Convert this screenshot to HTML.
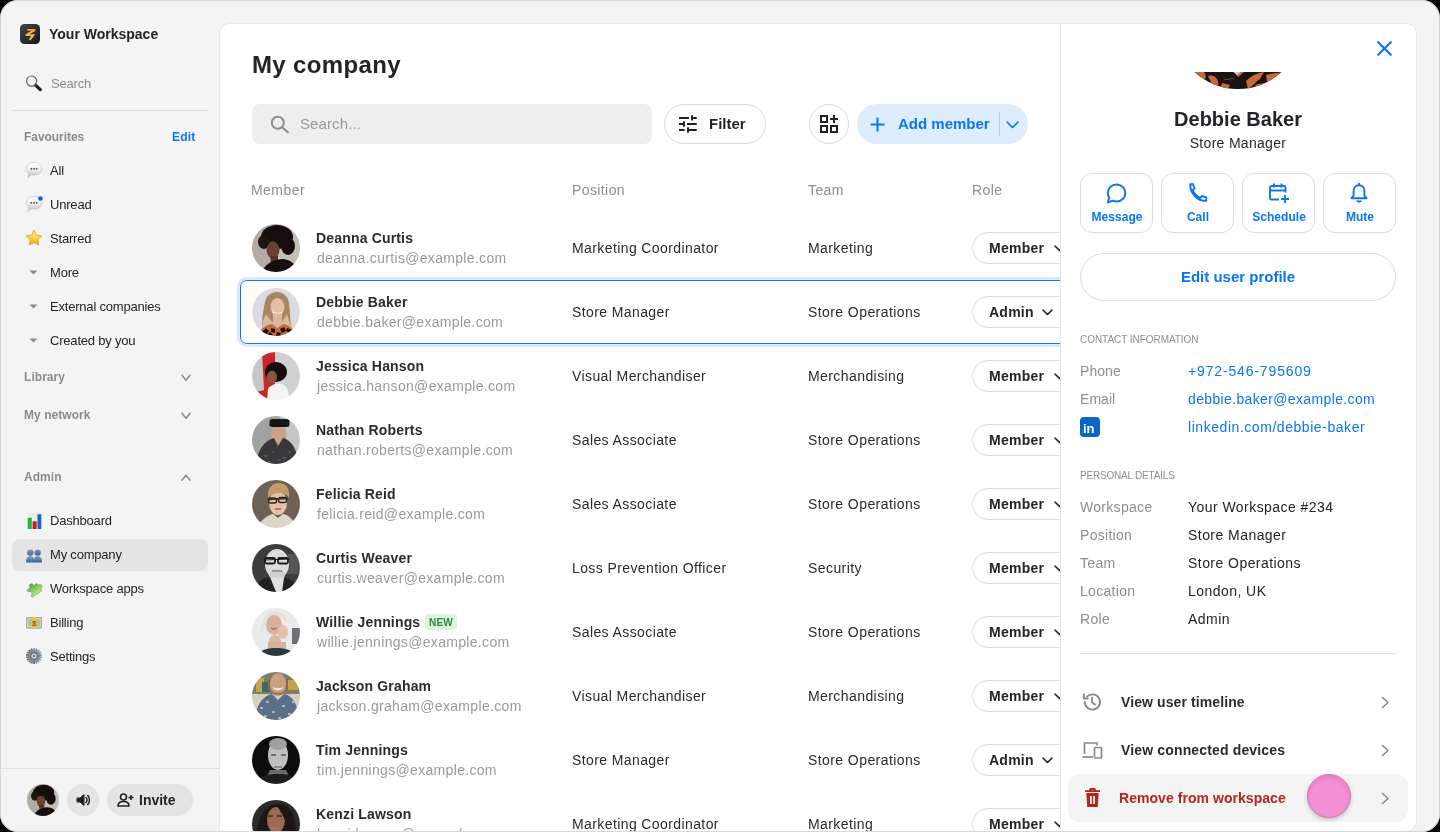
<!DOCTYPE html><html><head><meta charset="utf-8"><style>
html,body{margin:0;padding:0;width:1440px;height:832px;overflow:hidden;background:#000;}
body{font-family:"Liberation Sans", sans-serif;}
.win{position:absolute;left:0;top:0;width:1440px;height:832px;border-radius:18px;background:#f4f4f4;overflow:hidden;}
.t{position:absolute;line-height:1;white-space:nowrap;will-change:transform;}
.b{position:absolute;box-sizing:border-box;}
</style></head><body><div class="win">
<svg class="b" style="left:20px;top:24px;" width="20" height="20" viewBox="0 0 20 20"><defs><linearGradient id="lg" x1="0" y1="0" x2="1" y2="1"><stop offset="0" stop-color="#41454d"/><stop offset="1" stop-color="#15171b"/></linearGradient>
<linearGradient id="bolt" x1="0" y1="0" x2="0" y2="1"><stop offset="0" stop-color="#f4a030"/><stop offset="1" stop-color="#f7cf3a"/></linearGradient></defs>
<rect x="0" y="0" width="20" height="20" rx="4.5" fill="url(#lg)"/>
<path d="M7.3 5.9 L15.2 5.9 L6 11.1 L13.4 11.1 L9.6 15.9" fill="none" stroke="url(#bolt)" stroke-width="1.9" stroke-linejoin="miter" stroke-miterlimit="3"/><path d="M9.8 8.4 L12.2 8.4" stroke="#f2b233" stroke-width="1.2"/></svg>
<div class="t" style="left:48.50px;top:27.15px;font-size:14px;font-weight:700;color:#232428;letter-spacing:0px;">Your Workspace</div>
<svg class="b" style="left:25px;top:75px;" width="18" height="18" viewBox="0 0 18 18"><circle cx="6.6" cy="6.1" r="5.1" fill="#f2f2f2" stroke="#5f6266" stroke-width="1.2"/><path d="M2.2 4.2 A5 5 0 0 1 6.6 1" stroke="#8fb0d8" stroke-width="1" fill="none"/>
<path d="M11 10.6 L15.3 14.6" stroke="#1e2124" stroke-width="3.3" stroke-linecap="round"/><path d="M10.4 10 L11.4 11" stroke="#555" stroke-width="1.2"/></svg>
<div class="t" style="left:50.50px;top:77.00px;font-size:13px;font-weight:400;color:#8b8b8b;letter-spacing:-0.2px;">Search</div>
<div class="b" style="left:12px;top:110px;width:196px;height:1px;background:#dcdce1;"></div>
<div class="t" style="left:23.80px;top:130.84px;font-size:12px;font-weight:700;color:#8b8b8b;letter-spacing:-0.05px;">Favourites</div>
<div class="t" style="right:1245.00px;top:130.84px;font-size:12px;font-weight:700;color:#0b76f2;letter-spacing:0.2px;">Edit</div>
<svg class="b" style="left:25.0px;top:161.0px;" width="18" height="18" viewBox="0 0 17 17"><defs><linearGradient id="bub161" x1="0" y1="0" x2="0" y2="1"><stop offset="0" stop-color="#ffffff"/><stop offset="0.5" stop-color="#ececec"/><stop offset="1" stop-color="#b8b8b8"/></linearGradient></defs>
<path d="M8.5 1.3 C12.9 1.3 16 4 16 7.4 C16 10.8 12.9 13.3 8.5 13.3 C7.6 13.3 6.8 13.2 6 13 L2.6 15.8 L3.6 12 C2.0 10.9 1 9.3 1 7.4 C1 4 4.1 1.3 8.5 1.3 Z" fill="url(#bub161)" stroke="#c2c2c2" stroke-width="0.6"/>
<circle cx="6" cy="7.4" r="0.85" fill="#444"/><circle cx="8.5" cy="7.4" r="0.85" fill="#444"/><circle cx="11" cy="7.4" r="0.85" fill="#444"/></svg>
<div class="t" style="left:50.00px;top:164.00px;font-size:13px;font-weight:400;color:#232428;letter-spacing:-0.2px;">All</div>
<svg class="b" style="left:25.0px;top:195.0px;" width="18" height="18" viewBox="0 0 17 17"><defs><linearGradient id="bub195" x1="0" y1="0" x2="0" y2="1"><stop offset="0" stop-color="#ffffff"/><stop offset="0.5" stop-color="#ececec"/><stop offset="1" stop-color="#b8b8b8"/></linearGradient></defs>
<path d="M8.5 1.3 C12.9 1.3 16 4 16 7.4 C16 10.8 12.9 13.3 8.5 13.3 C7.6 13.3 6.8 13.2 6 13 L2.6 15.8 L3.6 12 C2.0 10.9 1 9.3 1 7.4 C1 4 4.1 1.3 8.5 1.3 Z" fill="url(#bub195)" stroke="#c2c2c2" stroke-width="0.6"/>
<circle cx="6" cy="7.4" r="0.85" fill="#444"/><circle cx="8.5" cy="7.4" r="0.85" fill="#444"/><circle cx="11" cy="7.4" r="0.85" fill="#444"/><circle cx="14.6" cy="3.3" r="2.2" fill="#1d56d8"/></svg>
<div class="t" style="left:50.00px;top:198.00px;font-size:13px;font-weight:400;color:#232428;letter-spacing:-0.2px;">Unread</div>
<svg class="b" style="left:25px;top:229px;" width="18" height="18" viewBox="0 0 18 18"><defs><linearGradient id="star" x1="0" y1="0" x2="0" y2="1"><stop offset="0" stop-color="#fff4a8"/><stop offset="0.5" stop-color="#fbd34a"/><stop offset="1" stop-color="#f0a51c"/></linearGradient></defs>
<path d="M9 1.2 L11.4 6.2 L16.8 6.9 L12.8 10.6 L13.8 16 L9 13.4 L4.2 16 L5.2 10.6 L1.2 6.9 L6.6 6.2 Z" fill="url(#star)" stroke="#eda021" stroke-width="0.9" stroke-linejoin="round"/></svg>
<div class="t" style="left:50.00px;top:232.00px;font-size:13px;font-weight:400;color:#232428;letter-spacing:-0.2px;">Starred</div>
<svg class="b" style="left:29px;top:269.5px;" width="9" height="5" viewBox="0 0 9 5"><path d="M0.5 0.5 L8.5 0.5 L4.5 4.5 Z" fill="#8a8a8a"/></svg>
<div class="t" style="left:50.00px;top:266.00px;font-size:13px;font-weight:400;color:#232428;letter-spacing:-0.2px;">More</div>
<svg class="b" style="left:29px;top:303.5px;" width="9" height="5" viewBox="0 0 9 5"><path d="M0.5 0.5 L8.5 0.5 L4.5 4.5 Z" fill="#8a8a8a"/></svg>
<div class="t" style="left:50.00px;top:300.00px;font-size:13px;font-weight:400;color:#232428;letter-spacing:-0.2px;">External companies</div>
<svg class="b" style="left:29px;top:337.5px;" width="9" height="5" viewBox="0 0 9 5"><path d="M0.5 0.5 L8.5 0.5 L4.5 4.5 Z" fill="#8a8a8a"/></svg>
<div class="t" style="left:50.00px;top:334.00px;font-size:13px;font-weight:400;color:#232428;letter-spacing:-0.2px;">Created by you</div>
<div class="t" style="left:23.80px;top:371.14px;font-size:12px;font-weight:700;color:#8b8b8b;letter-spacing:0.05px;">Library</div>
<svg class="b" style="left:181px;top:373.5px;" width="10" height="8" viewBox="0 0 10 8"><path d="M1 1.2 L5.00 6.20 L9 1.2" fill="none" stroke="#8a8a8a" stroke-width="1.5" stroke-linecap="round" stroke-linejoin="round"/></svg>
<div class="t" style="left:23.80px;top:409.14px;font-size:12px;font-weight:700;color:#8b8b8b;letter-spacing:0.05px;">My network</div>
<svg class="b" style="left:181px;top:411.5px;" width="10" height="8" viewBox="0 0 10 8"><path d="M1 1.2 L5.00 6.20 L9 1.2" fill="none" stroke="#8a8a8a" stroke-width="1.5" stroke-linecap="round" stroke-linejoin="round"/></svg>
<div class="t" style="left:23.80px;top:471.14px;font-size:12px;font-weight:700;color:#8b8b8b;letter-spacing:0.05px;">Admin</div>
<svg class="b" style="left:181px;top:473.5px;" width="10" height="8" viewBox="0 0 10 8"><path d="M1 6.20 L5.00 1.2 L9 6.20" fill="none" stroke="#8a8a8a" stroke-width="1.5" stroke-linecap="round" stroke-linejoin="round"/></svg>
<div class="b" style="left:12px;top:539px;width:196px;height:32px;background:#e4e4e4;border-radius:8px;"></div>
<svg class="b" style="left:26.5px;top:513px;" width="15" height="17" viewBox="0 0 15 17"><defs><linearGradient id="dbg" x1="0" y1="0" x2="0" y2="1"><stop offset="0" stop-color="#e4ebf2"/><stop offset="1" stop-color="#f6f8fa"/></linearGradient></defs><rect x="0.5" y="0.5" width="14" height="16" fill="url(#dbg)"/>
<rect x="0.7" y="4.8" width="4.1" height="11.2" fill="#22b53a"/><rect x="5.6" y="8.3" width="4.1" height="7.7" fill="#d01d1d"/><rect x="10.5" y="1.3" width="3.8" height="14.7" fill="#1f5fc9"/></svg>
<div class="t" style="left:50.00px;top:514.00px;font-size:13px;font-weight:400;color:#232428;letter-spacing:-0.2px;">Dashboard</div>
<svg class="b" style="left:26px;top:549px;" width="16" height="14" viewBox="0 0 16 14"><defs><linearGradient id="ppl" x1="0" y1="0" x2="0" y2="1"><stop offset="0" stop-color="#7d9fc8"/><stop offset="1" stop-color="#3d628f"/></linearGradient></defs>
<circle cx="4.3" cy="3.6" r="3.2" fill="url(#ppl)"/><path d="M0 13.5 C0 8.8 1.5 7.3 4.3 7.3 C7.1 7.3 8.3 8.8 8.3 13.5 Z" fill="url(#ppl)"/>
<circle cx="11.7" cy="3.6" r="3.2" fill="url(#ppl)"/><path d="M7.7 13.5 C7.7 8.8 8.9 7.3 11.7 7.3 C14.5 7.3 16 8.8 16 13.5 Z" fill="url(#ppl)"/></svg>
<div class="t" style="left:50.00px;top:548.00px;font-size:13px;font-weight:400;color:#232428;letter-spacing:-0.2px;">My company</div>
<svg class="b" style="left:25px;top:580px;" width="18" height="18" viewBox="0 0 18 18"><defs><linearGradient id="pz" x1="0" y1="0" x2="0" y2="1"><stop offset="0" stop-color="#4ea84a"/><stop offset="1" stop-color="#b8e878"/></linearGradient></defs>
<g transform="translate(9 9.5) rotate(-35)"><path d="M-6 -3.5 L-2 -3.5 C-3 -7.5 3 -7.5 2 -3.5 L6 -3.5 L6 -1 C9.5 -2 9.5 4 6 3 L6 5.5 L-6 5.5 L-6 3 C-3 4 -3 -2 -6 -1 Z" fill="url(#pz)" stroke="#3f8a38" stroke-width="0.4"/></g></svg>
<div class="t" style="left:50.00px;top:582.00px;font-size:13px;font-weight:400;color:#232428;letter-spacing:-0.2px;">Workspace apps</div>
<svg class="b" style="left:26px;top:617px;" width="16" height="11.5" viewBox="0 0 16 11.5"><rect x="0.3" y="0.3" width="15.4" height="10.9" rx="1" fill="#b9bba0" stroke="#8d8f75" stroke-width="0.6"/><rect x="1.8" y="1.8" width="12.4" height="7.9" fill="none" stroke="#e8e8d8" stroke-width="0.6"/>
<rect x="5.6" y="0.3" width="4.8" height="10.9" fill="#f0c43a"/><text x="8" y="8.6" font-size="7.5" text-anchor="middle" fill="#4a4a20" font-family="Liberation Sans">$</text></svg>
<div class="t" style="left:50.00px;top:616.00px;font-size:13px;font-weight:400;color:#232428;letter-spacing:-0.2px;">Billing</div>
<svg class="b" style="left:26px;top:648px;" width="16" height="16" viewBox="0 0 16 16"><defs><linearGradient id="gr" x1="0" y1="0" x2="1" y2="1"><stop offset="0" stop-color="#a9b1b8"/><stop offset="1" stop-color="#5a636b"/></linearGradient></defs>
<g transform="translate(8 8)"><g fill="url(#gr)"><rect x="-1" y="-8" width="2" height="16" rx="0.5" transform="rotate(0)"/><rect x="-1" y="-8" width="2" height="16" rx="0.5" transform="rotate(20)"/><rect x="-1" y="-8" width="2" height="16" rx="0.5" transform="rotate(40)"/><rect x="-1" y="-8" width="2" height="16" rx="0.5" transform="rotate(60)"/><rect x="-1" y="-8" width="2" height="16" rx="0.5" transform="rotate(80)"/><rect x="-1" y="-8" width="2" height="16" rx="0.5" transform="rotate(100)"/><rect x="-1" y="-8" width="2" height="16" rx="0.5" transform="rotate(120)"/><rect x="-1" y="-8" width="2" height="16" rx="0.5" transform="rotate(140)"/><rect x="-1" y="-8" width="2" height="16" rx="0.5" transform="rotate(160)"/></g>
<circle r="6" fill="#838c94"/><circle r="4.2" fill="#6d767e"/><circle r="2.6" fill="#d6dade"/><circle r="1.3" fill="#6d767e"/></g></svg>
<div class="t" style="left:50.00px;top:650.00px;font-size:13px;font-weight:400;color:#232428;letter-spacing:-0.2px;">Settings</div>
<div class="b" style="left:0px;top:768px;width:220px;height:1px;background:#dcdce1;"></div>
<svg class="b" style="left:27px;top:784px;" width="32" height="32" viewBox="0 0 48 48"><defs><clipPath id="c1"><circle cx="24" cy="24" r="24"/></clipPath><filter id="fc1" x="-10%" y="-10%" width="120%" height="120%"><feGaussianBlur stdDeviation="0.7"/></filter></defs><g clip-path="url(#c1)"><g filter="url(#fc1)"><rect width="48" height="48" fill="#b3aca4"/><rect x="26" width="22" height="48" fill="#c4beb7"/>
<ellipse cx="25" cy="13" rx="16" ry="12" fill="#17110e"/><ellipse cx="36" cy="22" rx="7" ry="9" fill="#17110e"/><ellipse cx="12" cy="18" rx="6" ry="7" fill="#1c1410"/>
<ellipse cx="21" cy="26" rx="6.5" ry="8.5" fill="#6b4331"/><path d="M18 32 L26 32 L26 39 L19 39 Z" fill="#55352a"/>
<path d="M10 48 C13 40 20 36 30 35 C38 35 44 40 46 48 Z" fill="#121111"/></g></g></svg>
<div class="b" style="left:67px;top:784px;width:32px;height:32px;background:#e4e4e4;border-radius:16px;"></div>
<svg class="b" style="left:75px;top:792px;" width="16" height="16" viewBox="0 0 16 16"><path d="M2 6 L5 6 L9 2.5 L9 13.5 L5 10 L2 10 Z" fill="#222" stroke="#222" stroke-width="1" stroke-linejoin="round"/>
<path d="M11 5.5 C12.3 6.8 12.3 9.2 11 10.5" fill="none" stroke="#222" stroke-width="1.5" stroke-linecap="round"/><path d="M12.8 3.5 C15 5.8 15 10.2 12.8 12.5" fill="none" stroke="#222" stroke-width="1.5" stroke-linecap="round"/></svg>
<div class="b" style="left:107px;top:784px;width:86px;height:32px;background:#e4e4e4;border-radius:16px;"></div>
<svg class="b" style="left:117px;top:792px;" width="17" height="16" viewBox="0 0 17 16"><circle cx="6.5" cy="5" r="3" fill="none" stroke="#222" stroke-width="1.6"/><path d="M1 14 C1 10.5 3.5 9.5 6.5 9.5 C9.5 9.5 12 10.5 12 14 Z" fill="none" stroke="#222" stroke-width="1.6" stroke-linejoin="round"/>
<path d="M14 3 L14 8 M11.5 5.5 L16.5 5.5" stroke="#222" stroke-width="1.6"/></svg>
<div class="t" style="left:139.00px;top:793.15px;font-size:14px;font-weight:700;color:#232428;letter-spacing:0px;">Invite</div>
<div class="b" style="left:220px;top:24px;width:1196px;height:807px;background:#fff;border-radius:10px 10px 10px 0;box-shadow:0 0 0 1px #e9e9ec;"></div>
<div class="t" style="left:252.30px;top:52.68px;font-size:24px;font-weight:700;color:#232428;letter-spacing:0.35px;">My company</div>
<div class="b" style="left:252px;top:104px;width:400px;height:40px;background:#eeeeee;border-radius:8px;"></div>
<svg class="b" style="left:270px;top:115px;" width="20" height="18" viewBox="0 0 20 18"><circle cx="7.8" cy="7.8" r="6" fill="none" stroke="#8c8c8c" stroke-width="2"/><path d="M12.2 12.2 L18 17.5" stroke="#8c8c8c" stroke-width="2.2" stroke-linecap="round"/></svg>
<div class="t" style="left:300.00px;top:116.30px;font-size:15px;font-weight:400;color:#9a9a9a;letter-spacing:0.1px;">Search...</div>
<div class="b" style="left:664px;top:104px;width:102px;height:40px;border:1px solid #dcdce0;border-radius:20px;background:#fff;"></div>
<svg class="b" style="left:679px;top:115px;" width="19" height="18" viewBox="0 0 19 18"><g stroke="#1f2023" stroke-width="1.9" stroke-linecap="butt">
<path d="M0 3 L10 3 M13 3 L17.8 3 M13 0.2 L13 5.6"/>
<path d="M0 9 L5 9 M8 9 L17.8 9 M5 6.3 L5 11.7"/>
<path d="M0 15 L5.6 15 M9 15 L17.8 15 M9 12.2 L9 17.8"/></g></svg>
<div class="t" style="left:708.80px;top:116.10px;font-size:15px;font-weight:700;color:#232428;letter-spacing:0px;">Filter</div>
<div class="b" style="left:809px;top:104px;width:40px;height:40px;border:1px solid #dcdce0;border-radius:20px;background:#fff;"></div>
<svg class="b" style="left:820px;top:115px;" width="18" height="18" viewBox="0 0 18 18"><g fill="none" stroke="#222" stroke-width="2">
<rect x="1" y="1" width="6" height="6"/><rect x="1" y="11" width="6" height="6"/><rect x="11" y="11" width="6" height="6"/>
<path d="M14 0 L14 8 M10 4 L18 4"/></g></svg>
<div class="b" style="left:857px;top:104px;width:171px;height:40px;background:#deedfd;border-radius:20px;"></div>
<svg class="b" style="left:869.5px;top:116.5px;" width="15" height="15" viewBox="0 0 15 15"><path d="M7.5 0.5 L7.5 14.5 M0.5 7.5 L14.5 7.5" stroke="#0b76f2" stroke-width="2"/></svg>
<div class="t" style="left:897.80px;top:116.10px;font-size:15px;font-weight:700;color:#0b76f2;letter-spacing:0px;">Add member</div>
<div class="b" style="left:999px;top:112px;width:1px;height:24px;background:#a9cdf6;"></div>
<svg class="b" style="left:1005.5px;top:120.5px;" width="13" height="8" viewBox="0 0 13 8"><path d="M1 1 L6.5 6.5 L12 1" fill="none" stroke="#0b76f2" stroke-width="1.6" stroke-linecap="round" stroke-linejoin="round"/></svg>
<div class="t" style="left:251.30px;top:183.15px;font-size:14px;font-weight:400;color:#8e8e8e;letter-spacing:0.45px;">Member</div>
<div class="t" style="left:571.50px;top:183.15px;font-size:14px;font-weight:400;color:#8e8e8e;letter-spacing:0.4px;">Position</div>
<div class="t" style="left:807.80px;top:183.15px;font-size:14px;font-weight:400;color:#8e8e8e;letter-spacing:0.4px;">Team</div>
<div class="t" style="left:971.50px;top:183.15px;font-size:14px;font-weight:400;color:#8e8e8e;letter-spacing:0.4px;">Role</div>
<div class="b" style="left:0;top:0;width:1060px;height:831px;overflow:hidden;">
<svg class="b" style="left:252px;top:224px;" width="48" height="48" viewBox="0 0 48 48"><defs><clipPath id="c2"><circle cx="24" cy="24" r="24"/></clipPath><filter id="fc2" x="-10%" y="-10%" width="120%" height="120%"><feGaussianBlur stdDeviation="0.7"/></filter></defs><g clip-path="url(#c2)"><g filter="url(#fc2)"><rect width="48" height="48" fill="#b3aca4"/><rect x="26" width="22" height="48" fill="#c4beb7"/>
<ellipse cx="25" cy="13" rx="16" ry="12" fill="#17110e"/><ellipse cx="36" cy="22" rx="7" ry="9" fill="#17110e"/><ellipse cx="12" cy="18" rx="6" ry="7" fill="#1c1410"/>
<ellipse cx="21" cy="26" rx="6.5" ry="8.5" fill="#6b4331"/><path d="M18 32 L26 32 L26 39 L19 39 Z" fill="#55352a"/>
<path d="M10 48 C13 40 20 36 30 35 C38 35 44 40 46 48 Z" fill="#121111"/></g></g></svg>
<div class="t" style="left:315.60px;top:230.95px;font-size:14px;font-weight:700;color:#2a2b2f;letter-spacing:0.17px;">Deanna Curtis</div>
<div class="t" style="left:316.50px;top:251.15px;font-size:14px;font-weight:400;color:#9a9a9a;letter-spacing:0.32px;">deanna.curtis@example.com</div>
<div class="t" style="left:572.20px;top:241.35px;font-size:14px;font-weight:400;color:#2a2b2f;letter-spacing:0.4px;">Marketing Coordinator</div>
<div class="t" style="left:808.20px;top:241.35px;font-size:14px;font-weight:400;color:#2a2b2f;letter-spacing:0.42px;">Marketing</div>
<div class="b" style="left:972px;top:232px;width:110px;height:32px;border:1px solid #dcdce2;border-radius:16px;background:#fff;"></div>
<div class="t" style="left:988.60px;top:241.15px;font-size:14px;font-weight:700;color:#232428;letter-spacing:0.25px;">Member</div>
<svg class="b" style="left:1054px;top:245px;" width="11" height="7" viewBox="0 0 11 7"><path d="M1 1 L5.5 5.5 L10 1" fill="none" stroke="#222" stroke-width="1.6" stroke-linecap="round" stroke-linejoin="round"/></svg>
<div class="b" style="left:240px;top:280px;width:900px;height:64px;border:1px solid #0b78f5;border-radius:7px;box-shadow:0 0 0 3px #dae9fc;"></div>
<svg class="b" style="left:252px;top:288px;" width="48" height="48" viewBox="0 0 48 48"><defs><clipPath id="c3"><circle cx="24" cy="24" r="24"/></clipPath><filter id="fc3" x="-10%" y="-10%" width="120%" height="120%"><feGaussianBlur stdDeviation="0.7"/></filter></defs><g clip-path="url(#c3)"><g filter="url(#fc3)"><rect width="48" height="48" fill="#dcdbe0"/>
<path d="M11 42 C9 30 12 20 13 14 C15 6 21 4 25 4 C31 4 36 8 37 15 C38 22 38 32 40 42 Z" fill="#a98563"/>
<path d="M11 42 C10 34 12 30 14 26 L20 34 L30 34 L35 26 C37 32 38 36 41 42 Z" fill="#d4bc9c"/>
<ellipse cx="25.5" cy="19" rx="7" ry="9" fill="#e6bea6"/><rect x="21" y="26" width="9" height="10" fill="#ddb49c"/>
<path d="M20 23 Q25.5 27 31 23 L30 24.5 Q25.5 26.5 21 24.5 Z" fill="#fff"/>
<path d="M6 48 C8 40 14 37 20 36 L25.5 40 L31 36 C37 37 42 40 44 48 Z" fill="#c56a38"/>
<path d="M10 44 l4 -4 l3 3 l-3 4z M19 40 l4 1 l0 4 l-4 -1z M28 41 l4 -2 l2 4 l-4 2z M35 40 l5 2 l-2 3 l-4 -2z M15 47 l3 -3 l3 3z M25 44 l4 1 l-1 3 l-4 0z M38 46 l3 -2 l2 3z" fill="#1a100c"/></g></g></svg>
<div class="t" style="left:315.60px;top:294.95px;font-size:14px;font-weight:700;color:#2a2b2f;letter-spacing:0.17px;">Debbie Baker</div>
<div class="t" style="left:316.50px;top:315.15px;font-size:14px;font-weight:400;color:#9a9a9a;letter-spacing:0.32px;">debbie.baker@example.com</div>
<div class="t" style="left:572.20px;top:305.35px;font-size:14px;font-weight:400;color:#2a2b2f;letter-spacing:0.4px;">Store Manager</div>
<div class="t" style="left:808.20px;top:305.35px;font-size:14px;font-weight:400;color:#2a2b2f;letter-spacing:0.42px;">Store Operations</div>
<div class="b" style="left:972px;top:296px;width:110px;height:32px;border:1px solid #dcdce2;border-radius:16px;background:#fff;"></div>
<div class="t" style="left:988.60px;top:305.15px;font-size:14px;font-weight:700;color:#232428;letter-spacing:0.25px;">Admin</div>
<svg class="b" style="left:1042px;top:309px;" width="11" height="7" viewBox="0 0 11 7"><path d="M1 1 L5.5 5.5 L10 1" fill="none" stroke="#222" stroke-width="1.6" stroke-linecap="round" stroke-linejoin="round"/></svg>
<svg class="b" style="left:252px;top:352px;" width="48" height="48" viewBox="0 0 48 48"><defs><clipPath id="c4"><circle cx="24" cy="24" r="24"/></clipPath><filter id="fc4" x="-10%" y="-10%" width="120%" height="120%"><feGaussianBlur stdDeviation="0.7"/></filter></defs><g clip-path="url(#c4)"><g filter="url(#fc4)"><rect width="48" height="48" fill="#c6c8c7"/><path d="M10 0 L23 0 L23 48 L8 48 L4 40 L12 38 Z" fill="#c8262b"/>
<rect x="23" y="0" width="25" height="48" fill="#cfd1d0"/>
<ellipse cx="24" cy="20" rx="11" ry="10" fill="#141010"/><ellipse cx="20" cy="25" rx="5" ry="6.5" fill="#87563d"/>
<path d="M15 48 L16 37 C18 33 24 31 30 32 C35 34 37 40 38 48 Z" fill="#f4f4f2"/></g></g></svg>
<div class="t" style="left:315.60px;top:358.95px;font-size:14px;font-weight:700;color:#2a2b2f;letter-spacing:0.17px;">Jessica Hanson</div>
<div class="t" style="left:316.50px;top:379.15px;font-size:14px;font-weight:400;color:#9a9a9a;letter-spacing:0.32px;">jessica.hanson@example.com</div>
<div class="t" style="left:572.20px;top:369.35px;font-size:14px;font-weight:400;color:#2a2b2f;letter-spacing:0.4px;">Visual Merchandiser</div>
<div class="t" style="left:808.20px;top:369.35px;font-size:14px;font-weight:400;color:#2a2b2f;letter-spacing:0.42px;">Merchandising</div>
<div class="b" style="left:972px;top:360px;width:110px;height:32px;border:1px solid #dcdce2;border-radius:16px;background:#fff;"></div>
<div class="t" style="left:988.60px;top:369.15px;font-size:14px;font-weight:700;color:#232428;letter-spacing:0.25px;">Member</div>
<svg class="b" style="left:1054px;top:373px;" width="11" height="7" viewBox="0 0 11 7"><path d="M1 1 L5.5 5.5 L10 1" fill="none" stroke="#222" stroke-width="1.6" stroke-linecap="round" stroke-linejoin="round"/></svg>
<svg class="b" style="left:252px;top:416px;" width="48" height="48" viewBox="0 0 48 48"><defs><clipPath id="c5"><circle cx="24" cy="24" r="24"/></clipPath><filter id="fc5" x="-10%" y="-10%" width="120%" height="120%"><feGaussianBlur stdDeviation="0.7"/></filter></defs><g clip-path="url(#c5)"><g filter="url(#fc5)"><rect width="48" height="48" fill="#a2a2a2"/><rect x="28" width="20" height="48" fill="#c6c6c6"/>
<ellipse cx="26.5" cy="18" rx="8" ry="10" fill="#c9a289"/><path d="M17 11 C17 3 37 2 37 11 L36 9 L18 9 Z" fill="#111"/><rect x="17.5" y="3" width="20" height="8" rx="3" fill="#151515"/>
<path d="M4 48 C5 36 12 24 22 22 L26 30 L31 22 C40 24 45 34 47 48 Z" fill="#39393b"/>
<path d="M12 40 h4 M20 36 h3 M30 42 h4 M36 36 h3 M16 46 h3 M26 44 h3" stroke="#6a6a6c" stroke-width="1"/></g></g></svg>
<div class="t" style="left:315.60px;top:422.95px;font-size:14px;font-weight:700;color:#2a2b2f;letter-spacing:0.17px;">Nathan Roberts</div>
<div class="t" style="left:316.50px;top:443.15px;font-size:14px;font-weight:400;color:#9a9a9a;letter-spacing:0.32px;">nathan.roberts@example.com</div>
<div class="t" style="left:572.20px;top:433.35px;font-size:14px;font-weight:400;color:#2a2b2f;letter-spacing:0.4px;">Sales Associate</div>
<div class="t" style="left:808.20px;top:433.35px;font-size:14px;font-weight:400;color:#2a2b2f;letter-spacing:0.42px;">Store Operations</div>
<div class="b" style="left:972px;top:424px;width:110px;height:32px;border:1px solid #dcdce2;border-radius:16px;background:#fff;"></div>
<div class="t" style="left:988.60px;top:433.15px;font-size:14px;font-weight:700;color:#232428;letter-spacing:0.25px;">Member</div>
<svg class="b" style="left:1054px;top:437px;" width="11" height="7" viewBox="0 0 11 7"><path d="M1 1 L5.5 5.5 L10 1" fill="none" stroke="#222" stroke-width="1.6" stroke-linecap="round" stroke-linejoin="round"/></svg>
<svg class="b" style="left:252px;top:480px;" width="48" height="48" viewBox="0 0 48 48"><defs><clipPath id="c6"><circle cx="24" cy="24" r="24"/></clipPath><filter id="fc6" x="-10%" y="-10%" width="120%" height="120%"><feGaussianBlur stdDeviation="0.7"/></filter></defs><g clip-path="url(#c6)"><g filter="url(#fc6)"><rect width="48" height="48" fill="#6e6258"/>
<ellipse cx="26" cy="23" rx="9" ry="12" fill="#e5c2a6"/><path d="M16 18 C15 6 22 3 27 3 C34 3 38 8 37 18 C34 12 22 11 16 18 Z" fill="#c59b6c"/>
<path d="M16 19.5 L36 18.5" stroke="#2a2a2a" stroke-width="1.3"/><rect x="16.5" y="18" width="8" height="5" rx="2" fill="none" stroke="#2a2a2a" stroke-width="1.4"/><rect x="26.5" y="17.5" width="8" height="5" rx="2" fill="none" stroke="#2a2a2a" stroke-width="1.4"/>
<path d="M23 29 h6" stroke="#a56a5e" stroke-width="1.6"/>
<path d="M6 48 C8 40 16 35 21 34 L26 38 L31 34 C37 35 42 40 44 48 Z" fill="#dfd5c7"/></g></g></svg>
<div class="t" style="left:315.60px;top:486.95px;font-size:14px;font-weight:700;color:#2a2b2f;letter-spacing:0.17px;">Felicia Reid</div>
<div class="t" style="left:316.50px;top:507.15px;font-size:14px;font-weight:400;color:#9a9a9a;letter-spacing:0.32px;">felicia.reid@example.com</div>
<div class="t" style="left:572.20px;top:497.35px;font-size:14px;font-weight:400;color:#2a2b2f;letter-spacing:0.4px;">Sales Associate</div>
<div class="t" style="left:808.20px;top:497.35px;font-size:14px;font-weight:400;color:#2a2b2f;letter-spacing:0.42px;">Store Operations</div>
<div class="b" style="left:972px;top:488px;width:110px;height:32px;border:1px solid #dcdce2;border-radius:16px;background:#fff;"></div>
<div class="t" style="left:988.60px;top:497.15px;font-size:14px;font-weight:700;color:#232428;letter-spacing:0.25px;">Member</div>
<svg class="b" style="left:1054px;top:501px;" width="11" height="7" viewBox="0 0 11 7"><path d="M1 1 L5.5 5.5 L10 1" fill="none" stroke="#222" stroke-width="1.6" stroke-linecap="round" stroke-linejoin="round"/></svg>
<svg class="b" style="left:252px;top:544px;" width="48" height="48" viewBox="0 0 48 48"><defs><clipPath id="c7"><circle cx="24" cy="24" r="24"/></clipPath><filter id="fc7" x="-10%" y="-10%" width="120%" height="120%"><feGaussianBlur stdDeviation="0.7"/></filter></defs><g clip-path="url(#c7)"><g filter="url(#fc7)"><rect width="48" height="48" fill="#3e3e3e"/><rect x="30" y="10" width="18" height="20" fill="#555"/>
<ellipse cx="25" cy="20" rx="12" ry="15" fill="#dcdcdc"/><ellipse cx="25" cy="31" rx="8" ry="6" fill="#cfcfcf"/>
<path d="M12 16 L38 15" stroke="#1a1a1a" stroke-width="1.2"/><rect x="13" y="14" width="10" height="5.5" rx="1.5" fill="none" stroke="#1a1a1a" stroke-width="1.8"/><rect x="26" y="14" width="10" height="5.5" rx="1.5" fill="none" stroke="#1a1a1a" stroke-width="1.8"/>
<path d="M20 27 h10" stroke="#777" stroke-width="1.3"/>
<path d="M2 48 C4 38 12 32 20 33 L26 48 Z M28 48 L32 34 C40 34 45 40 47 48 Z" fill="#222"/><path d="M18 33 L32 34 L30 48 L24 48 Z" fill="#e0e0e0"/></g></g></svg>
<div class="t" style="left:315.60px;top:550.95px;font-size:14px;font-weight:700;color:#2a2b2f;letter-spacing:0.17px;">Curtis Weaver</div>
<div class="t" style="left:316.50px;top:571.15px;font-size:14px;font-weight:400;color:#9a9a9a;letter-spacing:0.32px;">curtis.weaver@example.com</div>
<div class="t" style="left:572.20px;top:561.35px;font-size:14px;font-weight:400;color:#2a2b2f;letter-spacing:0.4px;">Loss Prevention Officer</div>
<div class="t" style="left:808.20px;top:561.35px;font-size:14px;font-weight:400;color:#2a2b2f;letter-spacing:0.42px;">Security</div>
<div class="b" style="left:972px;top:552px;width:110px;height:32px;border:1px solid #dcdce2;border-radius:16px;background:#fff;"></div>
<div class="t" style="left:988.60px;top:561.15px;font-size:14px;font-weight:700;color:#232428;letter-spacing:0.25px;">Member</div>
<svg class="b" style="left:1054px;top:565px;" width="11" height="7" viewBox="0 0 11 7"><path d="M1 1 L5.5 5.5 L10 1" fill="none" stroke="#222" stroke-width="1.6" stroke-linecap="round" stroke-linejoin="round"/></svg>
<svg class="b" style="left:252px;top:608px;" width="48" height="48" viewBox="0 0 48 48"><defs><clipPath id="c8"><circle cx="24" cy="24" r="24"/></clipPath><filter id="fc8" x="-10%" y="-10%" width="120%" height="120%"><feGaussianBlur stdDeviation="0.7"/></filter></defs><g clip-path="url(#c8)"><g filter="url(#fc8)"><rect width="48" height="48" fill="#e9eced"/><rect x="40" y="20" width="8" height="16" fill="#6a7074"/>
<path d="M9 28 C8 12 14 3 23 3 C31 3 35 8 36 16 L30 10 L14 14 Z" fill="#e8e2d4"/>
<ellipse cx="22" cy="17" rx="8" ry="10" fill="#d9b29c"/><path d="M19 20 q3 2 6 0" stroke="#b0605a" stroke-width="1.4" fill="none"/>
<ellipse cx="31" cy="24" rx="5" ry="7" fill="#e2c0ac"/><ellipse cx="23" cy="33" rx="6" ry="6" fill="#dcb8a2"/><rect x="16" y="34" width="18" height="8" fill="#d5b09a"/>
<path d="M6 48 C8 42 14 40 24 40 C34 40 40 42 44 48 Z" fill="#2b3a40"/></g></g></svg>
<div class="t" style="left:315.60px;top:614.95px;font-size:14px;font-weight:700;color:#2a2b2f;letter-spacing:0.17px;">Willie Jennings</div>
<div class="b" style="left:424.8px;top:613.7px;width:32px;height:16px;background:#dcf3dd;border-radius:4px;"></div>
<div class="t" style="left:429.00px;top:618.33px;font-size:10px;font-weight:700;color:#2a8a3a;letter-spacing:0.2px;">NEW</div>
<div class="t" style="left:316.50px;top:635.15px;font-size:14px;font-weight:400;color:#9a9a9a;letter-spacing:0.32px;">willie.jennings@example.com</div>
<div class="t" style="left:572.20px;top:625.35px;font-size:14px;font-weight:400;color:#2a2b2f;letter-spacing:0.4px;">Sales Associate</div>
<div class="t" style="left:808.20px;top:625.35px;font-size:14px;font-weight:400;color:#2a2b2f;letter-spacing:0.42px;">Store Operations</div>
<div class="b" style="left:972px;top:616px;width:110px;height:32px;border:1px solid #dcdce2;border-radius:16px;background:#fff;"></div>
<div class="t" style="left:988.60px;top:625.15px;font-size:14px;font-weight:700;color:#232428;letter-spacing:0.25px;">Member</div>
<svg class="b" style="left:1054px;top:629px;" width="11" height="7" viewBox="0 0 11 7"><path d="M1 1 L5.5 5.5 L10 1" fill="none" stroke="#222" stroke-width="1.6" stroke-linecap="round" stroke-linejoin="round"/></svg>
<svg class="b" style="left:252px;top:672px;" width="48" height="48" viewBox="0 0 48 48"><defs><clipPath id="c9"><circle cx="24" cy="24" r="24"/></clipPath><filter id="fc9" x="-10%" y="-10%" width="120%" height="120%"><feGaussianBlur stdDeviation="0.7"/></filter></defs><g clip-path="url(#c9)"><g filter="url(#fc9)"><rect width="48" height="48" fill="#d6cfc0"/><rect x="0" y="0" width="48" height="22" fill="#7b8064"/><rect x="4" y="6" width="8" height="14" fill="#c7a452"/><rect x="36" y="8" width="10" height="10" fill="#c4a24e"/><rect x="10" y="10" width="8" height="10" fill="#3e6a62"/>
<ellipse cx="26" cy="12" rx="8" ry="11" fill="#caa080"/><path d="M18 8 L18 18 L16 18 L16 6 Z M34 8 L36 6 L36 18 L34 18Z" fill="#8a6a48"/>
<path d="M21 15 q5 3 10 0 l-1 2 q-4 2 -8 0z" fill="#fff"/><path d="M19 18 q7 6 14 0 l0 3 q-7 5 -14 0z" fill="#9a7860"/>
<path d="M3 48 C4 34 10 24 20 22 L26 28 L32 22 C42 24 46 34 47 48 Z" fill="#5a7088"/>
<path d="M8 36 h3 M14 30 h3 M20 40 h3 M30 34 h3 M36 42 h3 M40 30 h3 M12 44 h3 M26 46 h3" stroke="#c0ccd6" stroke-width="1.4"/></g></g></svg>
<div class="t" style="left:315.60px;top:678.95px;font-size:14px;font-weight:700;color:#2a2b2f;letter-spacing:0.17px;">Jackson Graham</div>
<div class="t" style="left:316.50px;top:699.15px;font-size:14px;font-weight:400;color:#9a9a9a;letter-spacing:0.32px;">jackson.graham@example.com</div>
<div class="t" style="left:572.20px;top:689.35px;font-size:14px;font-weight:400;color:#2a2b2f;letter-spacing:0.4px;">Visual Merchandiser</div>
<div class="t" style="left:808.20px;top:689.35px;font-size:14px;font-weight:400;color:#2a2b2f;letter-spacing:0.42px;">Merchandising</div>
<div class="b" style="left:972px;top:680px;width:110px;height:32px;border:1px solid #dcdce2;border-radius:16px;background:#fff;"></div>
<div class="t" style="left:988.60px;top:689.15px;font-size:14px;font-weight:700;color:#232428;letter-spacing:0.25px;">Member</div>
<svg class="b" style="left:1054px;top:693px;" width="11" height="7" viewBox="0 0 11 7"><path d="M1 1 L5.5 5.5 L10 1" fill="none" stroke="#222" stroke-width="1.6" stroke-linecap="round" stroke-linejoin="round"/></svg>
<svg class="b" style="left:252px;top:736px;" width="48" height="48" viewBox="0 0 48 48"><defs><clipPath id="c10"><circle cx="24" cy="24" r="24"/></clipPath><filter id="fc10" x="-10%" y="-10%" width="120%" height="120%"><feGaussianBlur stdDeviation="0.7"/></filter></defs><g clip-path="url(#c10)"><g filter="url(#fc10)"><rect width="48" height="48" fill="#0b0b0b"/>
<ellipse cx="26" cy="19" rx="10" ry="15" fill="#bfbfbf"/><ellipse cx="26" cy="8" rx="9" ry="6" fill="#a0a0a0"/>
<path d="M19 19 h5 M29 19 h5" stroke="#555" stroke-width="1.5"/><path d="M22 31 h8" stroke="#666" stroke-width="1.2"/>
<path d="M18 34 L34 34 L38 42 L14 42 Z" fill="#6a6a6a"/><path d="M6 48 C8 40 14 38 26 38 C38 38 44 40 46 48 Z" fill="#1c1c1c"/></g></g></svg>
<div class="t" style="left:315.60px;top:742.95px;font-size:14px;font-weight:700;color:#2a2b2f;letter-spacing:0.17px;">Tim Jennings</div>
<div class="t" style="left:316.50px;top:763.15px;font-size:14px;font-weight:400;color:#9a9a9a;letter-spacing:0.32px;">tim.jennings@example.com</div>
<div class="t" style="left:572.20px;top:753.35px;font-size:14px;font-weight:400;color:#2a2b2f;letter-spacing:0.4px;">Store Manager</div>
<div class="t" style="left:808.20px;top:753.35px;font-size:14px;font-weight:400;color:#2a2b2f;letter-spacing:0.42px;">Store Operations</div>
<div class="b" style="left:972px;top:744px;width:110px;height:32px;border:1px solid #dcdce2;border-radius:16px;background:#fff;"></div>
<div class="t" style="left:988.60px;top:753.15px;font-size:14px;font-weight:700;color:#232428;letter-spacing:0.25px;">Admin</div>
<svg class="b" style="left:1042px;top:757px;" width="11" height="7" viewBox="0 0 11 7"><path d="M1 1 L5.5 5.5 L10 1" fill="none" stroke="#222" stroke-width="1.6" stroke-linecap="round" stroke-linejoin="round"/></svg>
<svg class="b" style="left:252px;top:800px;" width="48" height="48" viewBox="0 0 48 48"><defs><clipPath id="c11"><circle cx="24" cy="24" r="24"/></clipPath><filter id="fc11" x="-10%" y="-10%" width="120%" height="120%"><feGaussianBlur stdDeviation="0.7"/></filter></defs><g clip-path="url(#c11)"><g filter="url(#fc11)"><rect width="48" height="48" fill="#2e2925"/><path d="M4 48 C3 20 12 4 26 4 C40 4 46 20 44 48 Z" fill="#1f1915"/>
<ellipse cx="24" cy="20" rx="9" ry="13" fill="#9b6a52"/><path d="M24 4 C32 4 36 12 34 22 L30 14 Z" fill="#1a1410"/>
<path d="M19 28 h8" stroke="#b0706a" stroke-width="1.8"/><path d="M16 16 h5 M25 16 h5" stroke="#3a2a22" stroke-width="1.3"/></g></g></svg>
<div class="t" style="left:315.60px;top:806.95px;font-size:14px;font-weight:700;color:#2a2b2f;letter-spacing:0.17px;">Kenzi Lawson</div>
<div class="t" style="left:316.50px;top:827.15px;font-size:14px;font-weight:400;color:#9a9a9a;letter-spacing:0.32px;">kenzi.lawson@example.com</div>
<div class="t" style="left:572.20px;top:817.35px;font-size:14px;font-weight:400;color:#2a2b2f;letter-spacing:0.4px;">Marketing Coordinator</div>
<div class="t" style="left:808.20px;top:817.35px;font-size:14px;font-weight:400;color:#2a2b2f;letter-spacing:0.42px;">Marketing</div>
<div class="b" style="left:972px;top:808px;width:110px;height:32px;border:1px solid #dcdce2;border-radius:16px;background:#fff;"></div>
<div class="t" style="left:988.60px;top:817.15px;font-size:14px;font-weight:700;color:#232428;letter-spacing:0.25px;">Member</div>
<svg class="b" style="left:1054px;top:821px;" width="11" height="7" viewBox="0 0 11 7"><path d="M1 1 L5.5 5.5 L10 1" fill="none" stroke="#222" stroke-width="1.6" stroke-linecap="round" stroke-linejoin="round"/></svg>
</div>
<div class="b" style="left:1060px;top:24px;width:356px;height:806px;background:#fff;border-left:1px solid #e3e3e8;border-radius:0 10px 10px 0;"></div>
<div class="b" style="left:1174px;top:72px;width:128px;height:17px;overflow:hidden;">
<svg style="position:absolute;left:0;top:-111px" width="128" height="128" viewBox="0 0 128 128"><defs><clipPath id="bigc"><circle cx="64" cy="64" r="64"/></clipPath></defs><g clip-path="url(#bigc)"><rect width="128" height="128" fill="#1b1310"/><path d="M8 110 C14 112 18 118 22 128 L12 128 Z M20 110 L30 111 C34 116 30 122 26 124 Z M34 115 C40 113 46 118 44 126 L38 128 C38 122 36 119 34 115 Z M60 111 L70 111 L64 116 Z M72 120 C78 114 84 112 90 111 L86 118 C82 120 78 126 74 128 Z M92 114 C98 112 104 112 110 111 L104 120 C100 118 96 120 94 126 Z M108 118 L120 112 L118 122 Z M48 122 L56 124 L54 128 L46 128 Z M80 124 L90 122 L92 128 Z M100 124 L106 126 L104 128Z M16 118 L24 116 L20 124Z" fill="#c8693a"/><path d="M58 110 L68 110 L63 114 Z" fill="#e8c0a8"/><path d="M50 118 C54 120 56 116 60 118" stroke="#6a6a6a" stroke-width="0.8" fill="none"/></g></svg></div>
<svg class="b" style="left:1376.5px;top:40.5px;" width="15" height="15" viewBox="0 0 15 15"><path d="M1.2 1.2 L13.8 13.8 M13.8 1.2 L1.2 13.8" stroke="#0b76f2" stroke-width="2.1" stroke-linecap="round"/></svg>
<div class="t" style="left:938.00px;width:600px;text-align:center;top:108.87px;font-size:20px;font-weight:700;color:#232428;letter-spacing:0px;">Debbie Baker</div>
<div class="t" style="left:938.00px;width:600px;text-align:center;top:136.15px;font-size:14px;font-weight:400;color:#2a2a2a;letter-spacing:0.3px;">Store Manager</div>
<div class="b" style="left:1080.25px;top:173px;width:72.5px;height:60px;border:1px solid #dcdce2;border-radius:12px;"></div>
<div class="t" style="left:816.50px;width:600px;text-align:center;top:210.84px;font-size:12px;font-weight:700;color:#0b76f2;letter-spacing:0.05px;">Message</div>
<div class="b" style="left:1161.25px;top:173px;width:72.5px;height:60px;border:1px solid #dcdce2;border-radius:12px;"></div>
<div class="t" style="left:897.50px;width:600px;text-align:center;top:210.84px;font-size:12px;font-weight:700;color:#0b76f2;letter-spacing:0.05px;">Call</div>
<div class="b" style="left:1242.25px;top:173px;width:72.5px;height:60px;border:1px solid #dcdce2;border-radius:12px;"></div>
<div class="t" style="left:978.50px;width:600px;text-align:center;top:210.84px;font-size:12px;font-weight:700;color:#0b76f2;letter-spacing:0.05px;">Schedule</div>
<div class="b" style="left:1323.25px;top:173px;width:72.5px;height:60px;border:1px solid #dcdce2;border-radius:12px;"></div>
<div class="t" style="left:1059.50px;width:600px;text-align:center;top:210.84px;font-size:12px;font-weight:700;color:#0b76f2;letter-spacing:0.05px;">Mute</div>
<svg class="b" style="left:1106px;top:183px;" width="21" height="21" viewBox="0 0 21 21"><path d="M10.5 1.5 C15.5 1.5 19.3 5.3 19.3 10 C19.3 14.7 15.5 18.5 10.5 18.5 C9.1 18.5 7.8 18.2 6.7 17.7 L1.7 19.5 L3.3 14.8 C2.4 13.5 1.8 11.8 1.8 10 C1.8 5.3 5.5 1.5 10.5 1.5 Z" fill="none" stroke="#0b76f2" stroke-width="1.9" stroke-linejoin="round"/></svg>
<svg class="b" style="left:1188px;top:183px;" width="20" height="20" viewBox="0 0 20 20"><path d="M2.2 1.3 L5.2 1.3 L6.5 5.5 L4.6 7.2 C6.0 10.6 8.9 13.5 12.3 14.8 L14 13 L18.2 14.3 L18.2 17.8 C10 18.5 1.8 10.4 2.2 1.3 Z" fill="none" stroke="#0b76f2" stroke-width="1.9" stroke-linejoin="round"/></svg>
<svg class="b" style="left:1268px;top:182px;" width="22" height="22" viewBox="0 0 22 22"><g fill="none" stroke="#0b76f2" stroke-width="1.9"><path d="M11 17.5 L3.5 17.5 C2.6 17.5 2 16.9 2 16 L2 5.5 C2 4.6 2.6 4 3.5 4 L16 4 C16.9 4 17.5 4.6 17.5 5.5 L17.5 10.5"/><path d="M2 8.5 L17.5 8.5"/><path d="M6 1.5 L6 5.5 M13.5 1.5 L13.5 5.5"/><path d="M17 13 L17 21 M13 17 L21 17"/></g></svg>
<svg class="b" style="left:1349px;top:182px;" width="20" height="22" viewBox="0 0 20 22"><g fill="none" stroke="#0b76f2" stroke-width="1.9" stroke-linejoin="round"><path d="M10 3.3 C6.7 3.3 4.6 5.9 4.6 9 L4.6 13.6 L2.5 16.2 L17.5 16.2 L15.4 13.6 L15.4 9 C15.4 5.9 13.3 3.3 10 3.3 Z"/><path d="M10 1 L10 3.3"/><path d="M7.8 18.6 C8.3 19.8 11.7 19.8 12.2 18.6"/></g></svg>
<div class="b" style="left:1080px;top:253px;width:316px;height:48px;border:1px solid #dcdce2;border-radius:24px;"></div>
<div class="t" style="left:938.00px;width:600px;text-align:center;top:268.90px;font-size:15px;font-weight:700;color:#0b76f2;letter-spacing:0px;">Edit user profile</div>
<div class="t" style="left:1080.40px;top:334.94px;font-size:10px;font-weight:400;color:#8e8e8e;letter-spacing:-0.05px;">CONTACT INFORMATION</div>
<div class="t" style="left:1080.40px;top:364.35px;font-size:14px;font-weight:400;color:#8e8e8e;letter-spacing:0.05px;">Phone</div>
<div class="t" style="left:1188.30px;top:364.35px;font-size:14px;font-weight:400;color:#0b76f2;letter-spacing:0.85px;">+972-546-795609</div>
<div class="t" style="left:1080.40px;top:392.35px;font-size:14px;font-weight:400;color:#8e8e8e;letter-spacing:0.05px;">Email</div>
<div class="t" style="left:1188.30px;top:392.35px;font-size:14px;font-weight:400;color:#0b76f2;letter-spacing:0.36px;">debbie.baker@example.com</div>
<div class="b" style="left:1080px;top:417px;width:20px;height:20px;background:#0a66c2;border-radius:4px;"></div>
<div class="t" style="left:1083.30px;top:421.50px;font-size:13px;font-weight:700;color:#fff;letter-spacing:0px;">in</div>
<div class="t" style="left:1188.30px;top:420.45px;font-size:14px;font-weight:400;color:#0b76f2;letter-spacing:0.55px;">linkedin.com/debbie-baker</div>
<div class="t" style="left:1080.40px;top:470.84px;font-size:10px;font-weight:400;color:#8e8e8e;letter-spacing:-0.2px;">PERSONAL DETAILS</div>
<div class="t" style="left:1080.40px;top:500.15px;font-size:14px;font-weight:400;color:#8e8e8e;letter-spacing:0.3px;">Workspace</div>
<div class="t" style="left:1188.30px;top:500.15px;font-size:14px;font-weight:400;color:#232428;letter-spacing:0.45px;">Your Workspace #234</div>
<div class="t" style="left:1080.40px;top:528.15px;font-size:14px;font-weight:400;color:#8e8e8e;letter-spacing:0.3px;">Position</div>
<div class="t" style="left:1188.30px;top:528.15px;font-size:14px;font-weight:400;color:#232428;letter-spacing:0.45px;">Store Manager</div>
<div class="t" style="left:1080.40px;top:556.15px;font-size:14px;font-weight:400;color:#8e8e8e;letter-spacing:0.3px;">Team</div>
<div class="t" style="left:1188.30px;top:556.15px;font-size:14px;font-weight:400;color:#232428;letter-spacing:0.45px;">Store Operations</div>
<div class="t" style="left:1080.40px;top:584.15px;font-size:14px;font-weight:400;color:#8e8e8e;letter-spacing:0.3px;">Location</div>
<div class="t" style="left:1188.30px;top:584.15px;font-size:14px;font-weight:400;color:#232428;letter-spacing:0.45px;">London, UK</div>
<div class="t" style="left:1080.40px;top:612.15px;font-size:14px;font-weight:400;color:#8e8e8e;letter-spacing:0.3px;">Role</div>
<div class="t" style="left:1188.30px;top:612.15px;font-size:14px;font-weight:400;color:#232428;letter-spacing:0.45px;">Admin</div>
<div class="b" style="left:1080px;top:653px;width:316px;height:1px;background:#e3e3e6;"></div>
<svg class="b" style="left:1082px;top:692px;" width="20" height="20" viewBox="0 0 20 20"><g fill="none" stroke="#8a8a8a" stroke-width="1.9" stroke-linecap="round" stroke-linejoin="round"><path d="M2.8 10 A7.6 7.6 0 1 0 5.0 4.6"/><path d="M1.8 2.5 L1.8 6.5 L5.8 6.5"/><path d="M10 5.8 L10 10.2 L13 12.6"/></g></svg>
<div class="t" style="left:1120.50px;top:695.15px;font-size:14px;font-weight:700;color:#2a2b2f;letter-spacing:0.1px;">View user timeline</div>
<svg class="b" style="left:1380.5px;top:695.5px;" width="9" height="13" viewBox="0 0 9 13"><path d="M1.5 1.5 L7 6.5 L1.5 11.5" fill="none" stroke="#8a8a8a" stroke-width="1.6" stroke-linecap="round" stroke-linejoin="round"/></svg>
<svg class="b" style="left:1082px;top:741px;" width="21" height="18" viewBox="0 0 21 18"><g fill="none" stroke="#8a8a8a" stroke-width="1.7"><path d="M2.5 13 L2.5 2 L15 2 L15 4.5"/><path d="M0.5 16 L11 16"/><rect x="12.5" y="6.5" width="7" height="10.5" rx="1"/></g></svg>
<div class="t" style="left:1120.50px;top:743.15px;font-size:14px;font-weight:700;color:#2a2b2f;letter-spacing:0.15px;">View connected devices</div>
<svg class="b" style="left:1380.5px;top:743.5px;" width="9" height="13" viewBox="0 0 9 13"><path d="M1.5 1.5 L7 6.5 L1.5 11.5" fill="none" stroke="#8a8a8a" stroke-width="1.6" stroke-linecap="round" stroke-linejoin="round"/></svg>
<div class="b" style="left:1068px;top:774px;width:340px;height:48px;background:#f4f4f4;border-radius:12px;"></div>
<svg class="b" style="left:1084px;top:788px;" width="17" height="20" viewBox="0 0 17 20"><path d="M1 3.2 L16 3.2 M5.5 3.2 L6.5 1 L10.5 1 L11.5 3.2" stroke="#b3261e" stroke-width="1.8" fill="none"/><path d="M2.3 5 L14.7 5 L13.8 19 L3.2 19 Z" fill="#b3261e"/><rect x="6" y="8" width="1.8" height="8" fill="#f4f4f4"/><rect x="9.2" y="8" width="1.8" height="8" fill="#f4f4f4"/></svg>
<div class="t" style="left:1119.30px;top:791.15px;font-size:14px;font-weight:700;color:#b3261e;letter-spacing:0.05px;">Remove from workspace</div>
<svg class="b" style="left:1380.5px;top:791.5px;" width="9" height="13" viewBox="0 0 9 13"><path d="M1.5 1.5 L7 6.5 L1.5 11.5" fill="none" stroke="#8a8a8a" stroke-width="1.6" stroke-linecap="round" stroke-linejoin="round"/></svg>
<div class="b" style="left:1307px;top:774px;width:44px;height:44px;background:#f491d4;border-radius:50%;border:1px solid #d877b8;box-shadow:inset 0 3px 4px rgba(200,60,160,0.25),0 2px 4px rgba(0,0,0,0.22);"></div>
<div class="b" style="left:0;top:0;width:1440px;height:832px;border:1px solid #d7d7dc;border-radius:18px;"></div>
</div></body></html>
